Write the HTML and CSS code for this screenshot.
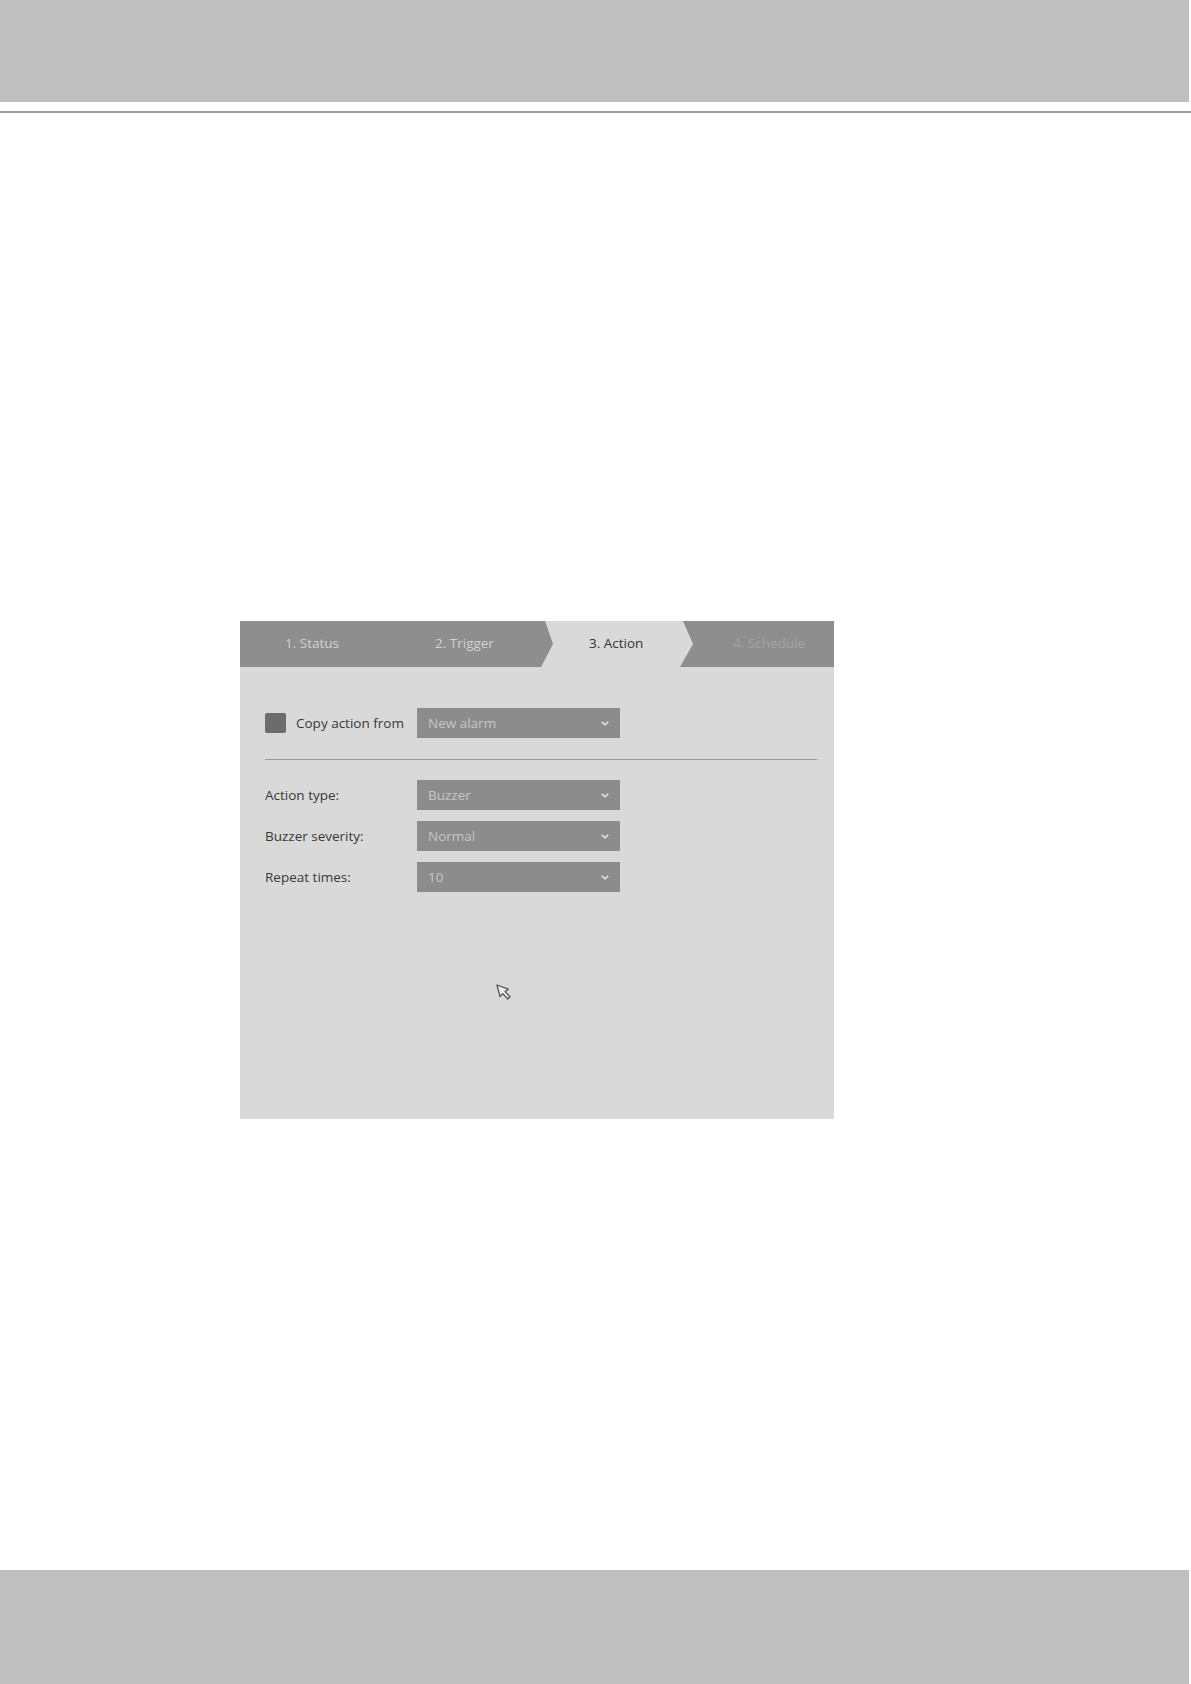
FILE: index.html
```html
<!DOCTYPE html>
<html lang="en">
<head>
<meta charset="utf-8">
<title>Action</title>
<link rel="stylesheet" href="styles.css">
</head>
<body>
<div class="page">
  <header class="top-band"></header>
  <div class="top-rule"></div>

  <main class="content">
    <section class="panel">
      <nav class="tabs">
        <div class="tab tab-1">1. Status</div>
        <div class="tab tab-2">2. Trigger</div>
        <div class="tab tab-3 active">3. Action</div>
        <div class="tab tab-4 disabled">4. Schedule</div>
      </nav>

      <div class="panel-body">
        <div class="row copy-row">
          <label class="copy-label"><span class="checkbox"></span>Copy action from</label>
          <div class="select">
            <span>New alarm</span>
            <svg class="chev" viewBox="0 0 8 5" width="8" height="5"><polyline points="0.8,0.8 4,3.8 7.2,0.8" fill="none" stroke="#e2e2e2" stroke-width="1.6"/></svg>
          </div>
        </div>

        <div class="separator"></div>

        <div class="fields">
          <div class="row">
            <span class="label">Action type:</span>
            <div class="select">
              <span>Buzzer</span>
              <svg class="chev" viewBox="0 0 8 5" width="8" height="5"><polyline points="0.8,0.8 4,3.8 7.2,0.8" fill="none" stroke="#e2e2e2" stroke-width="1.6"/></svg>
            </div>
          </div>
          <div class="row">
            <span class="label">Buzzer severity:</span>
            <div class="select">
              <span>Normal</span>
              <svg class="chev" viewBox="0 0 8 5" width="8" height="5"><polyline points="0.8,0.8 4,3.8 7.2,0.8" fill="none" stroke="#e2e2e2" stroke-width="1.6"/></svg>
            </div>
          </div>
          <div class="row">
            <span class="label">Repeat times:</span>
            <div class="select">
              <span>10</span>
              <svg class="chev" viewBox="0 0 8 5" width="8" height="5"><polyline points="0.8,0.8 4,3.8 7.2,0.8" fill="none" stroke="#e2e2e2" stroke-width="1.6"/></svg>
            </div>
          </div>
        </div>
      </div>

      <svg class="cursor" viewBox="0 0 17 16" width="17" height="16">
        <path d="M1 1 L4 12.5 L6.8 9.6 L11.8 15 L14 12.8 L9 7.6 L12.3 5.2 Z" fill="#ececec" stroke="#555" stroke-width="1.3" stroke-linejoin="round"/>
      </svg>
    </section>
  </main>

  <footer class="bottom-band"></footer>
</div>
</body>
</html>
```

FILE: styles.css
```css
html, body {
  margin: 0;
  padding: 0;
  background: #ffffff;
}

.page {
  display: flex;
  flex-direction: column;
  min-height: 1684px;
  font-family: "Open Sans", "Noto Sans", "DejaVu Sans", sans-serif;
}

.top-band {
  height: 102px;
  background: #bfbfbf;
  margin-right: 2px;
}

.top-rule {
  margin-top: 9px;
  height: 2px;
  background: #9b9b9b;
}

.content {
  padding-top: 508px;
  padding-left: 240px;
}

.panel {
  position: relative;
  width: 594px;
  height: 498px;
  background: #d9d9d9;
}

/* tabs */
.tabs {
  display: flex;
  height: 46px;
  background: #8e8e8e;
}

.tab {
  display: flex;
  align-items: center;
  box-sizing: border-box;
  height: 46px;
  font-size: 13.5px;
  color: #d2d2d2;
  white-space: nowrap;
  padding-bottom: 3px;
}

.tab-1 { width: 170px; padding-left: 45px; }
.tab-2 { width: 131px; padding-left: 25px; }
.tab-3 {
  width: 152px;
  padding-left: 48px;
  background: #d9d9d9;
  color: #333333;
  clip-path: polygon(4px 0, 12px 23px, 0 46px, 139px 46px, 152px 23px, 142px 0);
}
.tab-4 { width: 141px; padding-left: 40px; color: #a3a3a3; }

/* body */
.panel-body {
  padding: 41px 17px 0 25px;
}

.row {
  display: grid;
  grid-template-columns: 152px 203px;
  align-items: center;
  height: 30px;
}

.copy-label {
  display: flex;
  align-items: center;
  gap: 10px;
  font-size: 13.5px;
  color: #383838;
}

.checkbox {
  width: 21px;
  height: 20px;
  border-radius: 2px;
  background: #6c6c6c;
}

.label {
  font-size: 13.5px;
  color: #383838;
}

.select {
  display: flex;
  align-items: center;
  justify-content: space-between;
  box-sizing: border-box;
  height: 30px;
  padding: 0 11px 0 11px;
  background: #8c8c8c;
  color: #c6c6c6;
  font-size: 13.5px;
}

.chev {
  display: block;
}

.separator {
  margin-top: 21px;
  height: 1px;
  background: #9a9a9a;
}

.fields {
  display: flex;
  flex-direction: column;
  gap: 11px;
  margin-top: 20px;
}

.cursor {
  position: absolute;
  left: 256px;
  top: 363px;
}

.bottom-band {
  margin-top: auto;
  height: 114px;
  background: #bfbfbf;
  margin-right: 2px;
}
```
